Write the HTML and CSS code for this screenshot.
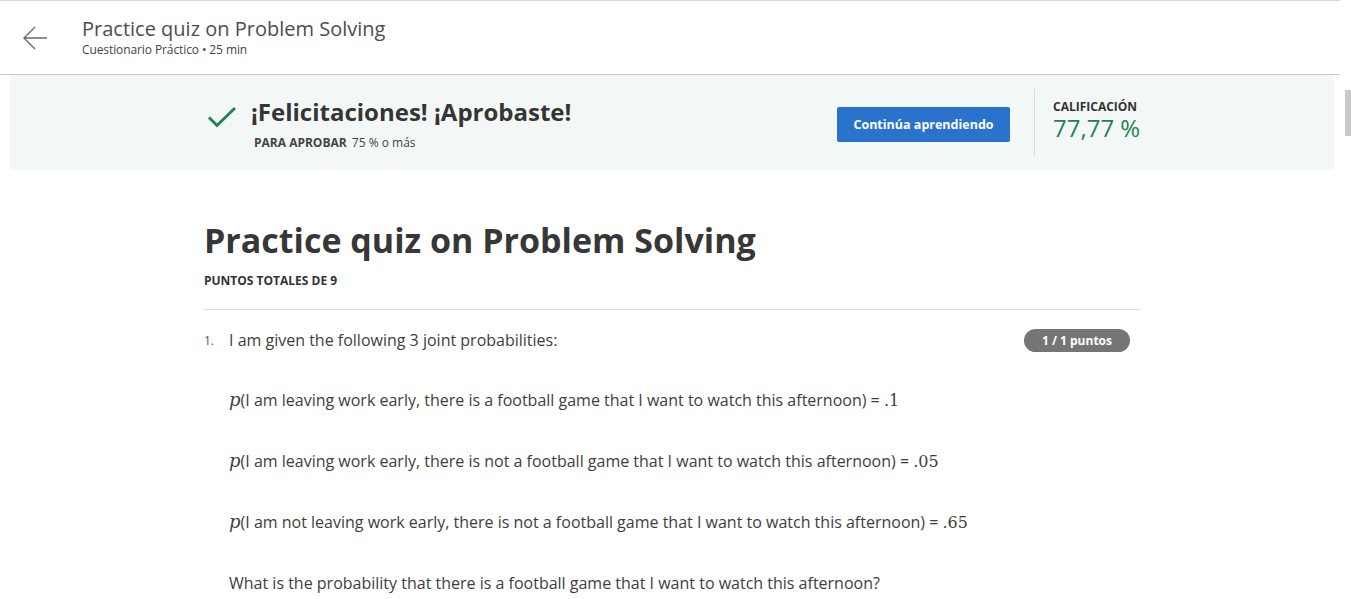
FILE: index.html
```html
<!DOCTYPE html>
<html lang="es">
<head>
<meta charset="utf-8">
<link rel="stylesheet" href="styles.css">
</head>
<body>
<header class="topbar">
  <button class="back" aria-label="Volver">
    <svg width="26" height="26" viewBox="0 0 26 26"><path d="M25 13H2M13 2L2 13l11 11" fill="none" stroke="#6b6b6b" stroke-width="1.4"/></svg>
  </button>
  <div class="titles">
    <div class="toptitle">Practice quiz on Problem Solving</div>
    <div class="subtitle">Cuestionario Práctico • 25 min</div>
  </div>
</header>
<main class="main">
  <section class="banner">
    <div class="banner-inner">
      <svg class="check" width="30" height="24" viewBox="0 0 30 24"><path d="M2 12.5l8 8L28 3" fill="none" stroke="#1f8354" stroke-width="3"/></svg>
      <div class="passed">
        <h2 class="congrats">¡Felicitaciones! ¡Aprobaste!</h2>
        <div class="pass-req"><span class="req-label">PARA APROBAR</span> 75 % o más</div>
      </div>
      <button class="continue">Continúa aprendiendo</button>
      <div class="grade">
        <div class="grade-label">CALIFICACIÓN</div>
        <div class="grade-value">77,77 %</div>
      </div>
    </div>
  </section>
  <section class="content">
    <h1 class="quiz-title">Practice quiz on Problem Solving</h1>
    <div class="total">PUNTOS TOTALES DE 9</div>
    <hr class="rule">
    <div class="question">
      <span class="qnum">1.</span>
      <div class="qbody">
        <div class="qhead">
          <p class="qtext">I am given the following 3 joint probabilities:</p>
          <span class="badge">1 / 1 puntos</span>
        </div>
        <p class="prob"><span class="math">p</span>(I am leaving work early, there is a football game that I want to watch this afternoon) = <span class="num">.1</span></p>
        <p class="prob"><span class="math">p</span>(I am leaving work early, there is not a football game that I want to watch this afternoon) = <span class="num">.05</span></p>
        <p class="prob"><span class="math">p</span>(I am not leaving work early, there is not a football game that I want to watch this afternoon) = <span class="num">.65</span></p>
        <p class="prob">What is the probability that there is a football game that I want to watch this afternoon?</p>
      </div>
    </div>
  </section>
  <div class="scroll-thumb"></div>
</main>
</body>
</html>
```

FILE: styles.css
```css
* { box-sizing: border-box; }
html, body { margin: 0; padding: 0; }
body {
  font-family: "Open Sans", "Noto Sans", sans-serif;
  color: #3c3c3c;
  background: #fff;
  overflow: hidden;
}
.topbar {
  height: 75px;
  border-top: 1px solid #d6d6d6;
  border-bottom: 1px solid #c9c9c9;
  display: flex;
  align-items: center;
  margin-right: 11px;
}
.back {
  border: 0;
  background: none;
  padding: 0;
  margin-left: 22px;
  width: 26px;
  height: 26px;
}
.titles { margin-left: 34px; margin-top: -3px; }
.toptitle { font-size: 20px; color: #4d4d4d; line-height: 26px; }
.subtitle { font-size: 12px; letter-spacing: -0.1px; color: #444; line-height: 15px; margin-top: 0px; }
.main { position: relative; padding: 0 17px 0 10px; }
.banner {
  background: #f3f8f6;
  height: 95px;
}
.banner-inner {
  width: 936px;
  margin: 0 auto;
  display: flex;
  align-items: flex-start;
  height: 100%;
}
.check { margin-left: 3px; margin-top: 30px; }
.passed { margin-left: 14px; margin-top: 21px; flex: 1; }
.congrats { margin: 0; font-size: 24px; font-weight: 700; color: #353535; line-height: 32px; }
.pass-req { font-size: 12px; color: #444; margin-top: 7px; margin-left: 3px; line-height: 16px; }
.req-label { font-weight: 700; margin-right: 2px; }
.continue {
  margin-top: 32px;
  width: 173px;
  height: 35px;
  border: 0;
  border-radius: 2px;
  background: #2a73cc;
  color: #fff;
  font-family: inherit;
  font-weight: 700;
  font-size: 12.5px;
}
.grade {
  margin-left: 24px;
  margin-top: 14px;
  height: 68px;
  border-left: 1px solid #dcdcdc;
  padding-left: 18px;
  width: 106px;
  white-space: nowrap;
}
.grade-label { font-size: 12px; font-weight: 700; color: #333; margin-top: 10px; line-height: 16px; }
.grade-value { font-size: 24px; color: #1f8354; line-height: 26px; margin-top: 0; }
.content { width: 936px; margin: 0 auto; padding-top: 46px; }
.quiz-title { margin: 0; font-size: 34px; font-weight: 700; color: #373737; line-height: 48px; }
.total { font-size: 12px; font-weight: 700; color: #333; margin-top: 9px; line-height: 16px; }
.rule { border: 0; border-top: 1px solid #dedede; margin: 20px 0 0; }
.question { display: flex; margin-top: 18px; }
.qnum { font-size: 12px; color: #555; width: 25px; line-height: 24px; padding-top: 1px; }
.qbody { flex: 1; }
.qhead { display: flex; justify-content: space-between; align-items: flex-start; }
.qtext { margin: 0; font-size: 16px; line-height: 24px; color: #3e3e3e; }
.badge {
  margin-top: 1px;
  margin-right: 10px;
  width: 106px;
  height: 23px;
  border-radius: 12px;
  background: #757575;
  color: #fff;
  font-size: 12px;
  font-weight: 700;
  display: flex;
  align-items: center;
  justify-content: center;
}
.prob { margin: 36px 0 0; font-size: 16px; line-height: 24px; color: #3e3e3e; }
.math { font-family: "DejaVu Serif", "Liberation Serif", serif; font-style: italic; font-size: 18px; }
.num { font-family: "DejaVu Serif", "Liberation Serif", serif; font-size: 16px; }
.scroll-thumb {
  position: absolute;
  right: 0;
  top: 15px;
  width: 6px;
  height: 46px;
  background: #c8c8c8;
}
```
